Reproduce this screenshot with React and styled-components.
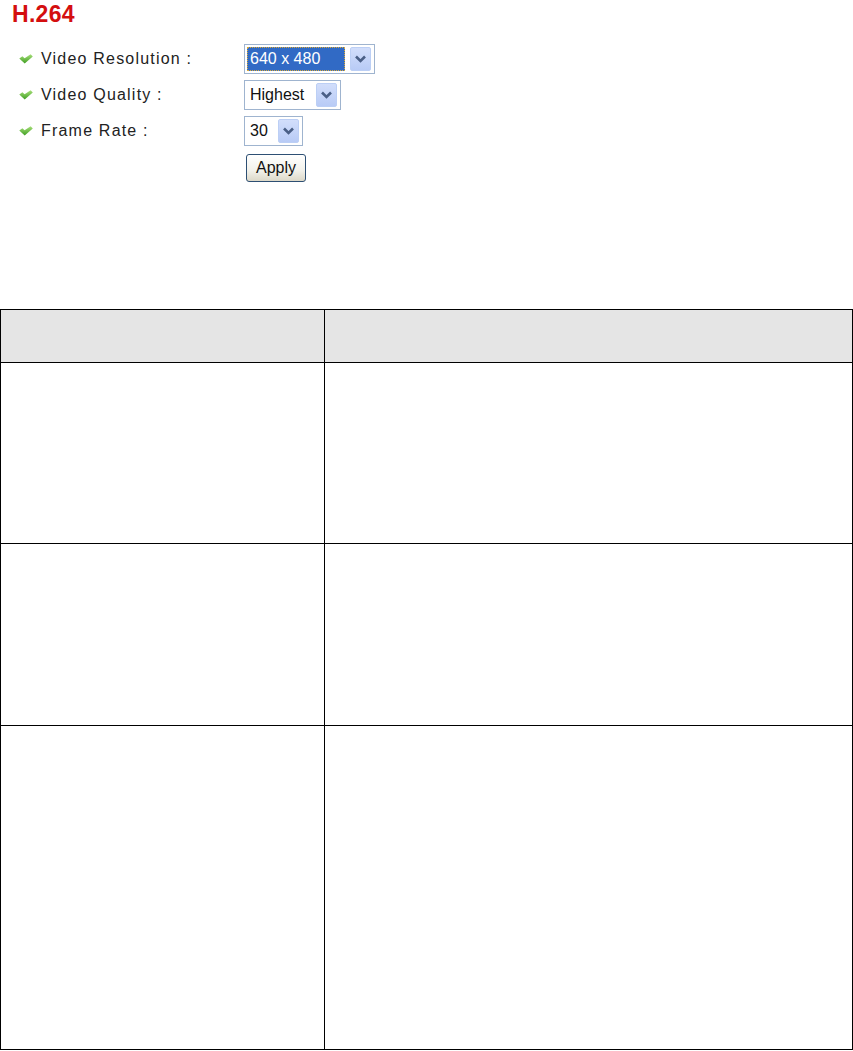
import React from "react";
import styled, { createGlobalStyle } from "styled-components";

const Global = createGlobalStyle`
  html, body { margin: 0; padding: 0; background: #fff; }
  body { font-family: "Liberation Sans", Arial, sans-serif; color: #000; }
`;

const Page = styled.div`
  width: 853px;
  display: flex;
  flex-direction: column;
`;

const Heading = styled.h1`
  margin: 0;
  padding: 1px 0 0 12px;
  font-size: 23px;
  line-height: 26px;
  font-weight: bold;
  color: #d40f0f;
  letter-spacing: 0.3px;
`;

const Form = styled.div`
  margin-top: 17px;
  display: grid;
  grid-template-columns: 244px auto;
  grid-auto-rows: 30px;
  row-gap: 6px;
  align-items: center;
`;

const Label = styled.div`
  display: flex;
  align-items: center;
  gap: 8px;
  padding-left: 19px;
  font-size: 16px;
  letter-spacing: 1.2px;
  color: #222;
`;

const SelectBox = styled.div`
  box-sizing: border-box;
  width: ${(p) => p.$w}px;
  height: 30px;
  border: 1px solid #9fb4cf;
  padding: 2px;
  display: flex;
  align-items: center;
  justify-content: space-between;
  background: #fff;
`;

const SelectText = styled.div`
  box-sizing: border-box;
  height: 24px;
  display: flex;
  align-items: center;
  padding-left: 3px;
  width: ${(p) => (p.$focused ? "98px" : "auto")};
  font-size: 16px;
  color: ${(p) => (p.$focused ? "#fff" : "#111")};
  background: ${(p) => (p.$focused ? "#316ac5" : "transparent")};
  outline: ${(p) => (p.$focused ? "1px dotted #d9a93a" : "none")};
  outline-offset: -1px;
`;

const DropButton = styled.div`
  box-sizing: border-box;
  width: 21px;
  height: 24px;
  margin-right: 1px;
  border-radius: 2px;
  border: 1px solid #bccff5;
  background: linear-gradient(#d2defb, #b8cbf6);
  display: flex;
  align-items: center;
  justify-content: center;
`;

const ApplyButton = styled.button`
  box-sizing: border-box;
  margin: 2px 0 0 2px;
  width: 60px;
  height: 28px;
  padding: 0;
  border: 1px solid #2d4f73;
  border-radius: 3px;
  background: linear-gradient(#ffffff, #f2f1ea 60%, #dcd8c8);
  font-family: "Liberation Sans", Arial, sans-serif;
  font-size: 16px;
  color: #111;
  justify-self: start;
  align-self: start;
`;

const Table = styled.table`
  margin-top: 127px;
  width: 853px;
  border-collapse: collapse;
  table-layout: fixed;
`;

const Cell = styled.td`
  border: 1px solid #000;
  padding: 0;
  height: ${(p) => p.$h}px;
  background: ${(p) => (p.$head ? "#e5e5e5" : "#fff")};
`;

const Check = () => (
  <svg width="14" height="10" viewBox="0 0 14 10">
    <defs>
      <linearGradient id="cg" x1="0" y1="0" x2="0" y2="1">
        <stop offset="0" stopColor="#a8e07a" />
        <stop offset="1" stopColor="#3f9e22" />
      </linearGradient>
    </defs>
    <path d="M0.3 4.4 L3.4 2.2 L5.6 4.3 L11.6 0.2 L13.8 2.4 L5.7 9.6 Z" fill="url(#cg)" />
  </svg>
);

const Chevron = () => (
  <svg width="11" height="8" viewBox="0 0 11 8">
    <path d="M1 1.5 L5.5 6 L10 1.5" fill="none" stroke="#4a5f86" strokeWidth="2.6" />
  </svg>
);

const Select = ({ w, value, focused }) => (
  <SelectBox $w={w}>
    <SelectText $focused={focused}>{value}</SelectText>
    <DropButton>
      <Chevron />
    </DropButton>
  </SelectBox>
);

const rows = [
  { label: "Video Resolution :", value: "640 x 480", w: 131, focused: true },
  { label: "Video Quality :", value: "Highest", w: 97 },
  { label: "Frame Rate :", value: "30", w: 59 },
];

export default function App() {
  return (
    <Page>
      <Global />
      <Heading>H.264</Heading>
      <Form>
        {rows.map((r) => (
          <React.Fragment key={r.label}>
            <Label>
              <Check />
              {r.label}
            </Label>
            <Select w={r.w} value={r.value} focused={r.focused} />
          </React.Fragment>
        ))}
        <div />
        <ApplyButton>Apply</ApplyButton>
      </Form>
      <Table>
        <colgroup>
          <col style={{ width: "324px" }} />
          <col />
        </colgroup>
        <tbody>
          <tr>
            <Cell $head $h={52} />
            <Cell $head $h={52} />
          </tr>
          <tr>
            <Cell $h={180} />
            <Cell $h={180} />
          </tr>
          <tr>
            <Cell $h={181} />
            <Cell $h={181} />
          </tr>
          <tr>
            <Cell $h={323} />
            <Cell $h={323} />
          </tr>
        </tbody>
      </Table>
    </Page>
  );
}
